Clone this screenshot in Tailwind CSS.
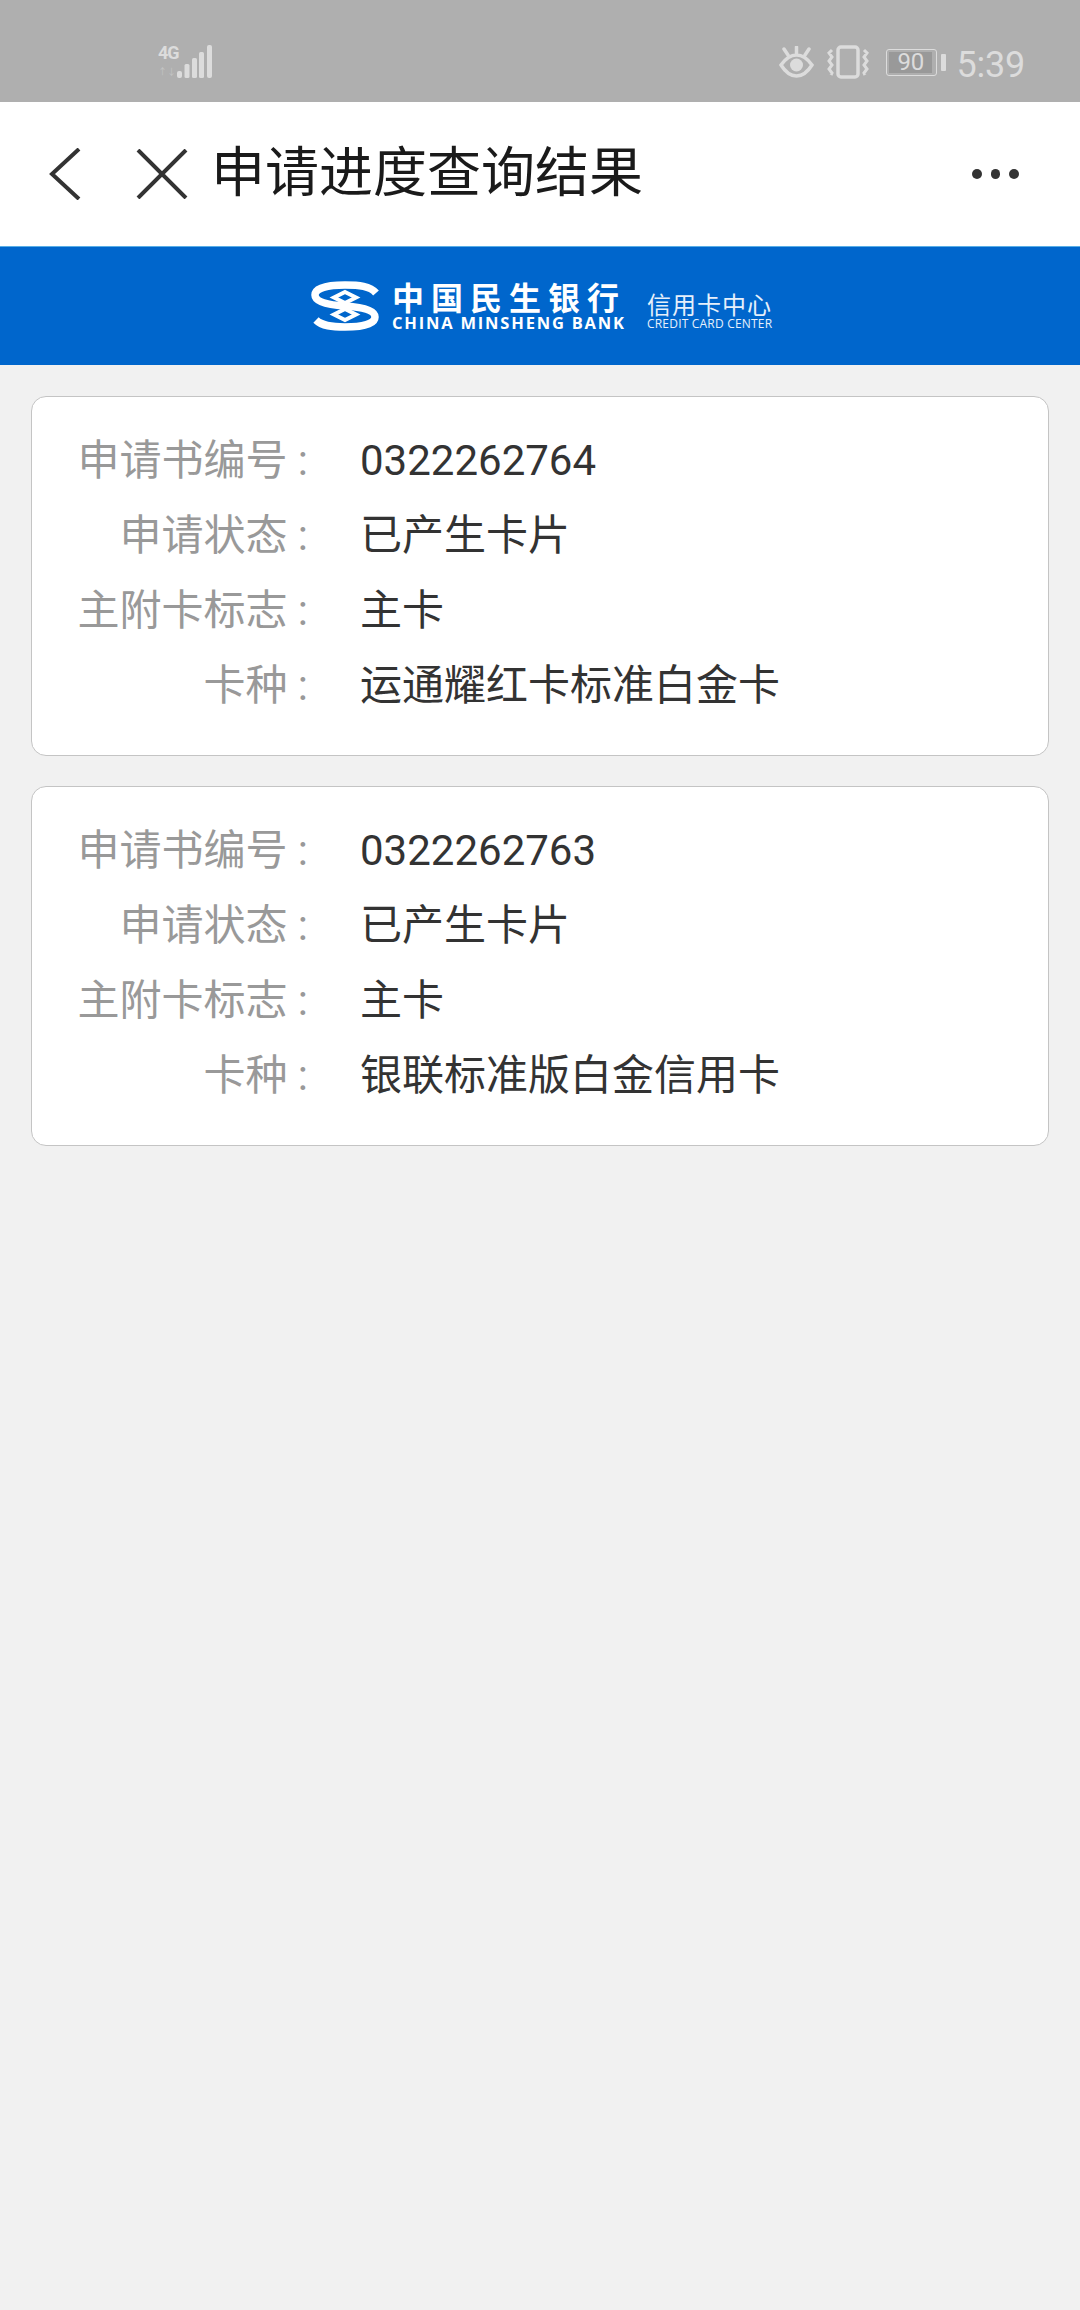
<!DOCTYPE html>
<html lang="zh">
<head>
<meta charset="utf-8">
<script src="https://cdn.jsdelivr.net/npm/@tailwindcss/browser@4"></script>
</head>
<body class="m-0 bg-[#f1f1f1] font-['Roboto','Noto_Sans_CJK_SC',sans-serif]">
<div class="w-[1080px] h-[2310px] overflow-hidden flex flex-col bg-[#f1f1f1]">

  <!-- status bar -->
  <div class="h-[102px] shrink-0 bg-[#afafaf] flex items-center justify-between pl-[158px] pr-[55px] text-[#dcdcdc]">
    <div class="flex items-end h-[34px] mt-[21px]">
      <div class="flex flex-col w-[19px] h-[34px] leading-none">
        <span class="text-[18px] font-bold leading-[15px] tracking-[-1px]">4G</span>
        <span class="text-[9px] leading-[10px] mt-[7px] text-[#c4c4c4]">↑↓</span>
      </div>
      <svg width="35" height="34" viewBox="0 0 35 34"><g fill="#dcdcdc"><rect x="0" y="26" width="5" height="7" rx="2"/><rect x="7.5" y="19" width="5" height="14" rx="1.5"/><rect x="15" y="13" width="5" height="20" rx="1.5"/><rect x="22" y="7" width="5" height="26" rx="1.5"/><rect x="30" y="0" width="5" height="33" rx="2"/></g></svg>
    </div>
    <div class="flex items-center mt-[22px]">
      <svg width="35" height="32" viewBox="0 0 35 32" fill="none" stroke="#dcdcdc" stroke-width="3.500"><path d="M2 19C7 12 12 9 17.500 9S28 12 33 19C28 27 23 30 17.500 30S7 27 2 19Z"/><circle cx="17.500" cy="19" r="6.500" fill="#dcdcdc" stroke="none"/><path d="M17.500 1v6M5 3l4 6M30 3l-4 6" stroke-linecap="round"/></svg>
      <svg width="42" height="34" viewBox="0 0 42 34" fill="none" stroke="#dcdcdc" class="ml-[13px]"><rect x="11" y="2" width="20" height="30" rx="3" stroke-width="3.500"/><path d="M5 5 2 8l3 4-3 4 3 4-3 4 3 4-1 2M37 5l3 3-3 4 3 4-3 4 3 4-3 4 1 2" stroke-width="3"/></svg>
      <div class="ml-[17px] flex items-center">
        <div class="relative w-[51px] h-[27px] rounded-[3px] border-[1.5px] border-[#dcdcdc] p-[2px]">
          <div class="w-[43px] h-full bg-[#999999]"></div>
          <span class="absolute inset-0 flex items-center justify-center text-[24px] leading-none pr-[2px]">90</span>
        </div>
        <div class="w-[5px] h-[17px] ml-[4px] bg-[#dcdcdc] rounded-[1px]"></div>
      </div>
      <span class="ml-[10px] mt-[5px] text-[36px] leading-none tracking-[-0.2px]">5:39</span>
    </div>
  </div>

  <!-- nav bar -->
  <div class="h-[144px] shrink-0 bg-white flex items-center relative">
    <svg width="36" height="52" viewBox="0 0 36 52" fill="none" stroke="#333333" stroke-width="4" class="ml-[49px]"><path d="M30 1 3 26l27 25"/></svg>
    <svg width="52" height="50" viewBox="0 0 52 50" fill="none" stroke="#333333" stroke-width="4" class="ml-[51px]"><path d="M2 1l48 48M50 1 2 49"/></svg>
    <span class="ml-[23px] text-[54px] leading-none text-[#1a1a1a]">申请进度查询结果</span>
    <div class="absolute left-[972px] top-[67px] flex gap-[9px]">
      <div class="w-[9.5px] h-[9.5px] rounded-full bg-[#333333]"></div>
      <div class="w-[9.5px] h-[9.5px] rounded-full bg-[#333333]"></div>
      <div class="w-[9.5px] h-[9.5px] rounded-full bg-[#333333]"></div>
    </div>
  </div>

  <!-- banner -->
  <div class="h-[119px] shrink-0 bg-[#0066cc] border-t border-[#58aee6] flex items-start pl-[310px] pt-[33px] text-white">
    <svg width="71" height="52" viewBox="0 0 71 52" fill="none" stroke="#ffffff">
      <path d="M66 13C60 6 49 5 35 5 18 5 5 8 5 15c0 7 13 10 30 11 17 1 30 4 30 11 0 7-13 10-30 10-13 0-23-1-29-7" stroke-width="7.500"/>
      <path d="M35 12 46 17.500 35 23 24 17.500Z" stroke-width="4"/>
      <path d="M35 29 46 34.500 35 40 24 34.500Z" stroke-width="4"/>
    </svg>
    <div class="ml-[11px] w-[236px] flex flex-col mt-[3px]">
      <span class="text-[32px] leading-[32px] font-bold tracking-[7px] whitespace-nowrap">中国民生银行</span>
      <span class="text-[16.5px] leading-[15px] font-bold tracking-[1.8px] whitespace-nowrap font-['Open_Sans',sans-serif]">CHINA MINSHENG BANK</span>
    </div>
    <div class="ml-[19px] flex flex-col mt-[14px] text-[#e6f0fb]">
      <span class="text-[24px] tracking-[1px] leading-[24px] whitespace-nowrap">信用卡中心</span>
      <span class="text-[12px] leading-[12px] tracking-[0.2px] whitespace-nowrap font-['Open_Sans',sans-serif]">CREDIT CARD CENTER</span>
    </div>
  </div>

  <!-- cards -->
  <div class="px-[31px] pt-[31px] flex flex-col gap-[30px]">

    <div class="h-[360px] bg-white border-[1.5px] border-[#c4c4c4] rounded-[15px] pt-[26px] flex flex-col">
      <div class="h-[75px] flex items-center text-[42px] leading-none">
        <div class="w-[276px] text-right text-[#999999] whitespace-nowrap">申请书编号 :</div><div class="ml-[52px] text-[#333333]">0322262764</div>
      </div>
      <div class="h-[75px] flex items-center text-[42px] leading-none">
        <div class="w-[276px] text-right text-[#999999] whitespace-nowrap">申请状态 :</div><div class="ml-[52px] text-[#333333]">已产生卡片</div>
      </div>
      <div class="h-[75px] flex items-center text-[42px] leading-none">
        <div class="w-[276px] text-right text-[#999999] whitespace-nowrap">主附卡标志 :</div><div class="ml-[52px] text-[#333333]">主卡</div>
      </div>
      <div class="h-[75px] flex items-center text-[42px] leading-none">
        <div class="w-[276px] text-right text-[#999999] whitespace-nowrap">卡种 :</div><div class="ml-[52px] text-[#333333]">运通耀红卡标准白金卡</div>
      </div>
    </div>

    <div class="h-[360px] bg-white border-[1.5px] border-[#c4c4c4] rounded-[15px] pt-[26px] flex flex-col">
      <div class="h-[75px] flex items-center text-[42px] leading-none">
        <div class="w-[276px] text-right text-[#999999] whitespace-nowrap">申请书编号 :</div><div class="ml-[52px] text-[#333333]">0322262763</div>
      </div>
      <div class="h-[75px] flex items-center text-[42px] leading-none">
        <div class="w-[276px] text-right text-[#999999] whitespace-nowrap">申请状态 :</div><div class="ml-[52px] text-[#333333]">已产生卡片</div>
      </div>
      <div class="h-[75px] flex items-center text-[42px] leading-none">
        <div class="w-[276px] text-right text-[#999999] whitespace-nowrap">主附卡标志 :</div><div class="ml-[52px] text-[#333333]">主卡</div>
      </div>
      <div class="h-[75px] flex items-center text-[42px] leading-none">
        <div class="w-[276px] text-right text-[#999999] whitespace-nowrap">卡种 :</div><div class="ml-[52px] text-[#333333]">银联标准版白金信用卡</div>
      </div>
    </div>

  </div>
</div>
</body>
</html>
